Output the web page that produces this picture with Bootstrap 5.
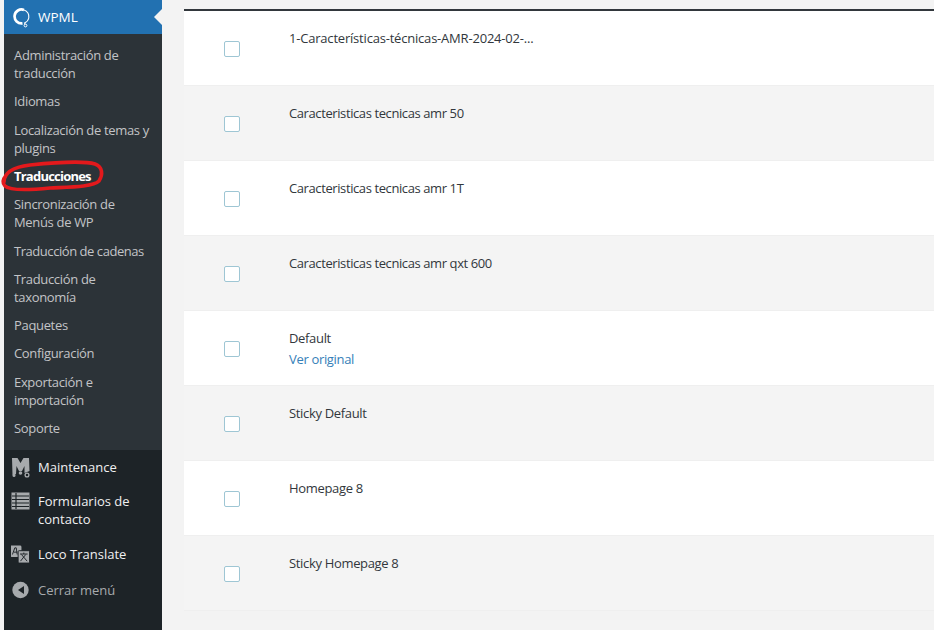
<!doctype html>
<html><head><meta charset="utf-8">
<link href="https://cdn.jsdelivr.net/npm/bootstrap@5.3.0/dist/css/bootstrap.min.css" rel="stylesheet">
<style>
html,body{margin:0;height:630px;overflow:hidden}
body{background:#f3f3f3;font-family:"Open Sans","Noto Sans",sans-serif;font-size:13px;line-height:18px;color:#32373c}
.shell{height:630px}
.side{width:158px;margin-left:4px;background:#1d2327;flex:none;height:630px;position:relative}
.wp-top{height:34px;background:#2271b1;color:#fff;padding-left:9px;gap:6px;position:relative;font-size:13.5px}
.wp-top:after{content:"";position:absolute;right:0;top:9px;border:8px solid transparent;border-right-color:#f3f3f3;border-left:0}
.subm{background:#2c3338;height:416px;padding-top:12px;color:#c3c4c7}
.subm a{display:block;color:#c3c4c7;text-decoration:none;padding:0 10px;margin-bottom:10.3px;letter-spacing:-.33px}
.subm a.cur{color:#fff;font-weight:700;letter-spacing:-.78px}
.subm a.nudge{margin-top:11px;margin-bottom:9.6px;letter-spacing:-.45px}
.mi{color:#f0f0f1;gap:8px;padding-left:7px}
.mi svg{flex:none}
.mi span{width:110px}
.mi.dim{color:#a7aaad}
.gap-a{margin-top:14px}
.gap-b{margin-top:17px}
.gap-c{margin-top:17px}
.main{margin-left:22px;flex:1;padding-top:9px}
.tbl{border-top:2px solid #32373c}
.rw{height:75px;background:#fff;border-bottom:1px solid #efefef;padding-left:40px;letter-spacing:-.33px}
.rw:nth-child(even){background:#f4f4f4}
.rw.wide{letter-spacing:-.2px}
.rw.tight{letter-spacing:-.4px}
.cb{width:16px;height:16px;border:1px solid #9ec6d4;border-radius:2px;background:#fff;margin-top:30px;flex:none}
.ttl{margin-left:49px;padding-top:18px}
.ttl a{display:block;color:#3580b8;text-decoration:none;margin-top:3px}
.scr{position:absolute;left:0;top:155px;pointer-events:none}
</style></head><body>
<div class="shell d-flex">
<nav class="side">
<div class="wp-top d-flex align-items-center">
<svg width="19" height="21" viewBox="0 0 19 21"><path d="M11 2.900A7 7 0 1 0 9.500 16.400" fill="none" stroke="#fff" stroke-width="2.700"/><path d="M11 3a7 7 0 0 1 4.800 8A7 7 0 0 1 11.500 16l.8 1.500" fill="none" stroke="#fff" stroke-width="1.100"/><circle cx="12.500" cy="18.500" r="1.400" fill="none" stroke="#fff"/></svg>
<span>WPML</span></div>
<div class="subm">
<a href="#">Administración de traducción</a>
<a href="#">Idiomas</a>
<a href="#">Localización de temas y plugins</a>
<a href="#" class="cur">Traducciones</a>
<a href="#">Sincronización de Menús de WP</a>
<a href="#" class="nudge">Traducción de cadenas</a>
<a href="#">Traducción de taxonomía</a>
<a href="#">Paquetes</a>
<a href="#">Configuración</a>
<a href="#">Exportación e importación</a>
<a href="#">Soporte</a>
</div>
<div class="mi d-flex align-items-start mt-2"><svg width="19" height="20" viewBox="0 0 19 20"><path d="M1 0h5.500L9.500 5l3-5H18l.5 13-2.500 1-2.500 1V8L11 13H8L5.500 8l-.5 8-1.500 1H1.500z" fill="#a7aaad"/><circle cx="3" cy="17.500" r="1.500" fill="#a7aaad"/><circle cx="9.500" cy="15" r="1.800" fill="#a7aaad"/><circle cx="16" cy="17" r="1.900" fill="none" stroke="#a7aaad" stroke-width="1.300"/></svg><span>Maintenance</span></div>
<div class="mi d-flex align-items-start gap-a"><svg width="19" height="18" viewBox="0 0 19 18"><rect x=".5" y=".5" width="18" height="17" fill="#a7aaad"/><path d="M1 4h17M1 7.500h17M1 11h17M1 14.500h17M5 1v16" stroke="#1d2327" stroke-width="1.200"/></svg><span>Formularios de contacto</span></div>
<div class="mi d-flex align-items-start gap-b"><svg width="19" height="19" viewBox="0 0 20 19"><rect x="-1" y="0" width="12" height="12" rx="1.500" fill="#a7aaad"/><path d="M1.500 9.500 4 2.500h1.500l1 7M3 7h3.500" fill="none" stroke="#1d2327"/><rect x="7.500" y="5.500" width="12" height="13" rx="1" fill="#a7aaad" stroke="#1d2327"/><path d="M9.500 9h8M13.500 7.500V9M10 16.500l5.500-7M17 16.500l-6-7" fill="none" stroke="#1d2327"/></svg><span>Loco Translate</span></div>
<div class="mi dim d-flex align-items-center gap-c"><svg width="19" height="18" viewBox="0 0 19 18"><circle cx="9.500" cy="9" r="8.200" fill="#a7aaad"/><path d="M13 5v8L7 9z" fill="#1d2327"/></svg><span>Cerrar menú</span></div>
</nav>
<main class="main">
<div class="tbl">
<div class="rw wide d-flex"><div class="cb"></div><div class="ttl">1-Características-técnicas-AMR-2024-02-...</div></div>
<div class="rw tight d-flex"><div class="cb"></div><div class="ttl">Caracteristicas tecnicas amr 50</div></div>
<div class="rw tight d-flex"><div class="cb"></div><div class="ttl">Caracteristicas tecnicas amr 1T</div></div>
<div class="rw tight d-flex"><div class="cb"></div><div class="ttl">Caracteristicas tecnicas amr qxt 600</div></div>
<div class="rw d-flex"><div class="cb"></div><div class="ttl">Default<a href="#">Ver original</a></div></div>
<div class="rw d-flex"><div class="cb"></div><div class="ttl">Sticky Default</div></div>
<div class="rw d-flex"><div class="cb"></div><div class="ttl">Homepage 8</div></div>
<div class="rw d-flex"><div class="cb"></div><div class="ttl">Sticky Homepage 8</div></div>
</div>
</main>
</div>
<svg class="scr" width="108" height="40" viewBox="0 0 108 40"><path d="M4 27C4 17 14 12 30 10 60 7 85 6 95 9c8 3 8 11 4 17-6 6-29 6-49 7-20 2-40 3-45-2-3-3-2-7 0-9" fill="none" stroke="#e3191c" stroke-width="3.600" stroke-linecap="round"/></svg>
<script src="https://cdn.jsdelivr.net/npm/bootstrap@5.3.0/dist/js/bootstrap.bundle.min.js"></script>
</body></html>
